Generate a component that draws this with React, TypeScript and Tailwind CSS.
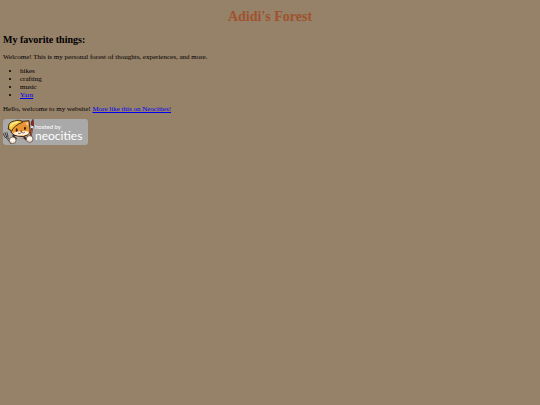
const things = [
  { name: "hikes" },
  { name: "crafting" },
  { name: "music" },
  { name: "Yarn", href: "#yarn" },
];

function PennyCat() {
  return (
    <svg viewBox="0 0 93 78" className="h-[26px] w-[31px] shrink-0" aria-hidden="true">
      {/* fork */}
      <g fill="none" stroke="#3f3a3d" strokeWidth="3" strokeLinecap="round">
        <path d="M1 44 L6 55 Q11 60 15 52 L12 41" />
        <path d="M6 41 L11 54" />
      </g>
      <path d="M12 55 L24 71" stroke="#3c3538" strokeWidth="6" strokeLinecap="round" />
      <path d="M12 55 L24 71" stroke="#c9c9cd" strokeWidth="2" strokeLinecap="round" />
      {/* body */}
      <path d="M28 48 Q28 60 34 68 L42 58 L62 58 L70 66 Q70 56 63 46 Z" fill="#3c2b22" />
      <path d="M34 50 L44 60 L60 58 L64 50 Z" fill="#b7adaa" />
      {/* head */}
      <path
        d="M26 15 L34 11 Q44 1 60 7 L78 5 L80 26 Q84 40 75 47 Q62 57 43 51 Q25 47 23 34 L15 29 Z"
        fill="#e99433"
        stroke="#3b2415"
        strokeWidth="3"
        strokeLinejoin="round"
      />
      <path d="M66 12 L75 9 L76 21 Z" fill="#f7c899" />
      <path d="M29 42 Q42 37 54 37 Q68 34 77 38 Q79 44 70 47 Q53 52 36 47 Z" fill="#fff0dc" />
      {/* helmet */}
      <path
        d="M17 30 Q13 9 34 6 Q51 0 59 10 Q47 13 37 22 Q29 28 26 36 Z"
        fill="#f4c83e"
        stroke="#4b3416"
        strokeWidth="3"
      />
      <path d="M23 22 Q29 11 45 9" fill="none" stroke="#fff0a5" strokeWidth="4" />
      {/* face */}
      <ellipse cx="41" cy="33" rx="3" ry="5" fill="#321e17" />
      <ellipse cx="66" cy="28" rx="3" ry="5" fill="#321e17" />
      <path d="M51 36 L58 34 L56 40 Z" fill="#7b3022" />
      <path d="M45 43 Q52 46 55 40 Q61 44 66 39" fill="none" stroke="#563020" strokeWidth="2" />
      {/* paint brush */}
      <path d="M88 22 L82 57" stroke="#54231e" strokeWidth="6" strokeLinecap="round" />
      <path d="M88 26 L83 53" stroke="#c05538" strokeWidth="3" />
      <path d="M84 17 Q84 7 90 1 Q93 11 91 21 Z" fill="#9c2020" stroke="#50201f" strokeWidth="2" />
      <path d="M84 20 L91 21 L90 28 L84 27 Z" fill="#d9d9dd" />
      {/* paws */}
      <circle cx="29" cy="64" r="10" fill="#fff5e8" stroke="#4a3024" strokeWidth="2" />
      <circle cx="80" cy="60" r="10" fill="#fff5e8" stroke="#4a3024" strokeWidth="2" />
      <path d="M26 68 L27 72 M32 67 L33 71 M78 64 L78 68 M84 63 L85 67" stroke="#bda18b" strokeWidth="2" />
    </svg>
  );
}

function HostedBadge() {
  return (
    <a
      href="#neocities"
      className="flex w-[85px] items-center rounded-[3px] bg-[#a9a9a9] text-white no-underline"
    >
      <PennyCat />
      <span className="flex flex-col pb-px pl-px font-[Lato,sans-serif]">
        <span className="text-[6px] leading-[8px]">hosted by</span>
        <span className="text-[12px] leading-[10px]">neocities</span>
      </span>
    </a>
  );
}

export default function App() {
  return (
    <div className="min-h-screen bg-[#968169] px-[3px] py-[9px] font-['Liberation_Serif',serif] text-[7px] leading-[8px] text-black">
      <h1 className="text-center text-[14px] leading-4 font-bold text-[#a0522d]">
        Adidi's Forest
      </h1>
      <h2 className="mt-[9px] text-[10px] leading-[11px] font-bold">My favorite things:</h2>
      <p className="mt-2">
        Welcome! This is my personal forest of thoughts, experiences, and more.
      </p>
      <ul className="mt-[6px] list-disc pl-[17px]">
        {things.map((thing) => (
          <li key={thing.name}>
            {thing.href ? (
              <a href={thing.href} className="text-[#0000ee] underline">
                {thing.name}
              </a>
            ) : (
              thing.name
            )}
          </li>
        ))}
      </ul>
      <p className="mt-[6px] mb-[6px]">
        Hello, welcome to my website!{" "}
        <a href="#neocities" className="text-[#0000ee] underline">
          More like this on Neocities!
        </a>
      </p>
      <HostedBadge />
    </div>
  );
}
